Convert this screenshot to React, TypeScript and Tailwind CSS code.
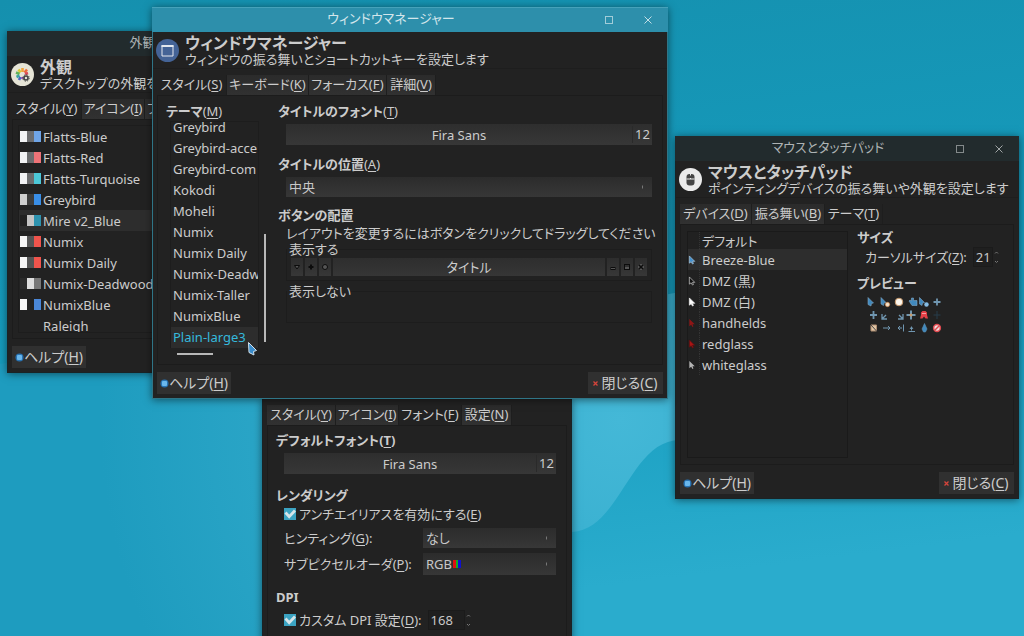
import { ReactNode } from "react";
import clsx from "clsx";

interface WindowProps {
    title?: string;
    active?: boolean;
    controls?: boolean;
    className: string;
    children: ReactNode;
}

function Window({ title, active, controls, className, children }: WindowProps) {
    return (
        <section
            className={clsx(
                "absolute bg-[#222222] shadow-[0_1px_8px_rgba(0,0,0,0.5)]",
                active ? "outline-1 -outline-offset-1 outline-[#2f7587]" : "outline-1 -outline-offset-1 outline-[#1a2325]",
                className
            )}
        >
            {title && (
                <div
                    className={clsx(
                        "relative flex h-[25px] items-center justify-center pb-1",
                        active ? "border-t border-[#46a2ba] bg-[#2d8fab] text-[#d3e6eb]" : "bg-[#222b2d] text-[#aeb3b4]"
                    )}
                >
                    <span className={clsx("leading-4", controls ? "pr-[38px]" : "pr-[2px]")}>{title}</span>
                    {controls && (
                        <div className="absolute right-0 top-0 flex h-full items-center gap-[23px] pr-4">
                            <button aria-label="最大化">
                                <svg width="16" height="16" viewBox="0 0 16 16" fill="none" stroke="currentColor" strokeOpacity="0.7">
                                    <rect x="4.5" y="4.5" width="7" height="7" />
                                </svg>
                            </button>
                            <button aria-label="閉じる" className="-mr-1">
                                <svg width="16" height="16" viewBox="0 0 16 16" fill="none" stroke="currentColor" strokeOpacity="0.9">
                                    <path d="M4.5 4.5l7 7M11.5 4.5l-7 7" />
                                </svg>
                            </button>
                        </div>
                    )}
                </div>
            )}
            {children}
        </section>
    );
}

function Header({ icon, title, text }: { icon: ReactNode; title: string; text: string }) {
    return (
        <header className="flex h-[37px] items-center gap-[6px] border-b border-[#1e1e1e] pl-[4px] pt-px">
            {icon}
            <div className="whitespace-nowrap">
                <h1 className="text-[16px] font-bold leading-4">{title}</h1>
                <p className="leading-4">{text}</p>
            </div>
        </header>
    );
}

// Label with its access key underlined, e.g. ヘルプ(H)
function Mnemonic({ text, hotkey, tail, bold }: { text: string; hotkey: string; tail?: string; bold?: boolean }) {
    return (
        <>
            {text}
            <span className={bold ? "font-bold" : "font-normal"}>
                (<u className="underline-offset-2">{hotkey}</u>){tail}
            </span>
        </>
    );
}

interface Tab {
    text: string;
    hotkey: string;
    width: string;
}

function Tabs({ tabs, active }: { tabs: Tab[]; active: number }) {
    return (
        <div role="tablist" className="mx-[5px] mt-[6px] flex h-5 overflow-hidden">
            {tabs.map((t, i) => (
                <button
                    key={t.text}
                    role="tab"
                    aria-selected={i === active}
                    className={clsx(
                        "flex shrink-0 justify-center whitespace-nowrap border-r border-[#1e1e1e] leading-[19px]",
                        t.width,
                        i === active ? "bg-[#222222]" : "bg-linear-to-b from-[#2b2b2b] to-[#313131]"
                    )}
                >
                    <Mnemonic text={t.text} hotkey={t.hotkey} />
                </button>
            ))}
        </div>
    );
}

function Footer({ closable }: { closable?: boolean }) {
    return (
        <footer className="flex justify-between px-[5px] pb-[5px] pt-[7px]">
            <button className="flex h-[22px] w-[74px] items-center justify-center bg-[#303030] text-[14px]">
                <svg width="9" height="9" viewBox="0 0 9 9">
                    <circle cx="4.5" cy="4.5" r="4" fill="#2873b3" />
                    <rect x="2" y="2" width="5" height="5" rx="1" fill="#6ab7ec" />
                </svg>
                <span>
                    <Mnemonic text="ヘルプ" hotkey="H" />
                </span>
            </button>
            {closable && (
                <button className="flex h-[22px] w-[75px] items-center justify-center gap-[3px] bg-[#303030] text-[14px]">
                    <svg width="5" height="5" viewBox="0 0 5 5" stroke="#d5443b" strokeWidth="1.3">
                        <path d="M.5 .5l4 4M4.5 .5l-4 4" />
                    </svg>
                    <span>
                        <Mnemonic text="閉じる" hotkey="C" />
                    </span>
                </button>
            )}
        </footer>
    );
}

function FontButton() {
    return (
        <button className="ml-2 flex h-[21px] items-center self-stretch bg-linear-to-b from-[#2e2e2e] to-[#373737] py-[2px]">
            <span className="flex-1">Fira Sans</span>
            <span className="w-5 border-l border-[#2a2a2a] leading-[17px]">12</span>
        </button>
    );
}

function Select({ id, value, className, children }: { id: string; value: string; className?: string; children?: ReactNode }) {
    return (
        <div className={clsx("relative flex bg-linear-to-b from-[#2c2c2c] to-[#373737]", className)}>
            <select id={id} className="w-full appearance-none bg-transparent pl-[3px] text-[#c8c8c8]">
                <option>{value}</option>
            </select>
            {children}
            <i className="pointer-events-none absolute right-[9px] top-1/2 h-[3px] w-px -translate-y-1/2 bg-[#777777]" />
        </div>
    );
}

function Spinner({ id, value, className }: { id: string; value: string; className: string }) {
    return (
        <div className="flex h-5 items-center">
            <input
                id={id}
                type="text"
                defaultValue={value}
                className={clsx("h-5 border border-[#1b1b1b] bg-[#1f1f1f] pl-[2px] text-[#c8c8c8]", className)}
            />
            <svg width="7" height="16" viewBox="0 0 7 16" fill="none" stroke="#777777">
                <path d="M2 4.5l1.5-1.5 1.5 1.5M2 12l1.5 1.5L5 12" />
            </svg>
        </div>
    );
}

function Check({ id, children }: { id: string; children: ReactNode }) {
    return (
        <div className="flex items-center gap-[3px]">
            <span className="relative flex">
                <input id={id} type="checkbox" defaultChecked className="h-3 w-3 appearance-none bg-[#3ba3c2]" />
                <svg className="pointer-events-none absolute inset-0" width="12" height="12" viewBox="0 0 12 12" fill="none" stroke="#d5e4e9" strokeWidth="2.8">
                    <path d="M1.5 4.500l3.700 4.200L11 2.500" />
                </svg>
            </span>
            <label htmlFor={id}>{children}</label>
        </div>
    );
}

const appearanceThemes = [
    { name: "Flatts-Blue", colors: ["#f2f3f5", "#6c6d6f", "#6fa5e8"] },
    { name: "Flatts-Red", colors: ["#f2f3f5", "#6c6d6f", "#ee7377"] },
    { name: "Flatts-Turquoise", colors: ["#f2f3f5", "#6c6d6f", "#4cc8d8"] },
    { name: "Greybird", colors: ["#cecece", "#3c3c3c", "#398ee7"] },
    { name: "Mire v2_Blue", colors: ["#222222", "#c4c4c4", "#2e93af"] },
    { name: "Numix", colors: ["#f5f5f5", "#555555", "#f0544c"] },
    { name: "Numix Daily", colors: ["#f5f5f5", "#555555", "#f0544c"] },
    { name: "Numix-Deadwood", colors: ["#2b2b2b", "#dddddd", "#777777"] },
    { name: "NumixBlue", colors: ["#f5f5f5", "#222222", "#4a87d8"] },
    { name: "Raleigh", colors: [] },
];

function AppearanceWindow() {
    return (
        <Window title="外観" className="left-[7px] top-[31px] w-[273px]">
            <Header
                title="外観"
                text="デスクトップの外観を設定します"
                icon={
                    <svg className="shrink-0" width="23" height="23" viewBox="0 0 23 23" fill="none" strokeWidth="2.6">
                        <circle cx="11.500" cy="11.500" r="11.500" fill="#e6e4d6" />
                        <path d="M11.500 9V5" stroke="#f2a23a" />
                        <path d="M13.500 9.500l2.500-3" stroke="#ec6a3c" />
                        <path d="M9.500 9.500L7.500 6.500" stroke="#d9c936" />
                        <path d="M8.500 11L5 9.500" stroke="#62b257" />
                        <path d="M8.500 12.500L5.500 14" stroke="#3aa6a0" />
                        <path d="M9.500 14l-1.500 3" stroke="#4a67c4" />
                        <path d="M14 11l3-1" stroke="#dc4a58" />
                        <path d="M11.500 14v2" stroke="#9653b5" />
                        <circle cx="15" cy="15" r="2" fill="#e6e4d6" stroke="#444444" strokeWidth="1.600" />
                        <circle cx="15" cy="15" r="3.200" stroke="#444444" strokeWidth="1" strokeDasharray="1.300 1.200" />
                    </svg>
                }
            />
            <Tabs
                active={0}
                tabs={[
                    { text: "スタイル", hotkey: "Y", width: "w-[70px]" },
                    { text: "アイコン", hotkey: "I", width: "w-[63px]" },
                    { text: "フォント", hotkey: "F", width: "w-[63px]" },
                ]}
            />
            <div className="mx-[5px] h-[220px] border border-[#1c1c1c] p-[5px]">
                <ul className="h-[208px] overflow-hidden border border-[#1d1d1d]">
                    {appearanceThemes.map(t => (
                        <li key={t.name} className={t.name === "Mire v2_Blue" ? "bg-[#2d2d2d]" : ""}>
                            <button className="flex h-[21px] w-full items-center gap-[2px] whitespace-nowrap">
                                <span className="ml-px flex h-[11px] w-[21px] shrink-0">
                                    {t.colors.map((c, i) => (
                                        <span key={i} className="flex-1" style={{ backgroundColor: c }} />
                                    ))}
                                </span>
                                {t.name}
                            </button>
                        </li>
                    ))}
                </ul>
            </div>
            <Footer />
        </Window>
    );
}

const wmThemes = [
    "Greybird",
    "Greybird-acce",
    "Greybird-com",
    "Kokodi",
    "Moheli",
    "Numix",
    "Numix Daily",
    "Numix-Deadw",
    "Numix-Taller",
    "NumixBlue",
    "Plain-large3",
];

function LayoutButton({ label, children }: { label: string; children: ReactNode }) {
    return (
        <button aria-label={label} className="flex w-3 shrink-0 items-center justify-center bg-linear-to-b from-[#2d2d2d] to-[#373737]">
            <svg width="8" height="8" viewBox="0 0 8 8" fill="#555555" stroke="#0c0c0c">
                {children}
            </svg>
        </button>
    );
}

function WindowManagerWindow() {
    return (
        <Window title="ウィンドウマネージャー" active controls className="left-[152px] top-[7px] w-[516px]">
            <Header
                title="ウィンドウマネージャー"
                text="ウィンドウの振る舞いとショートカットキーを設定します"
                icon={
                    <svg className="shrink-0" width="23" height="23" viewBox="0 0 23 23" fill="none">
                        <circle cx="11.500" cy="11.500" r="11.500" fill="#446396" />
                        <path d="M6 6.500h11v10.500H6z" stroke="#e4e8ee" />
                        <path d="M5.500 7h12" stroke="#e4e8ee" strokeWidth="2" />
                    </svg>
                }
            />
            <Tabs
                active={0}
                tabs={[
                    { text: "スタイル", hotkey: "S", width: "w-[70px]" },
                    { text: "キーボード", hotkey: "K", width: "w-[82px]" },
                    { text: "フォーカス", hotkey: "F", width: "w-[78px]" },
                    { text: "詳細", hotkey: "V", width: "w-[49px]" },
                ]}
            />
            <div className="mx-[5px] flex h-[270px] gap-3 border border-[#1c1c1c] pl-2 pr-[10px] pt-[5px]">
                <div className="w-[100px] shrink-0">
                    <h2 className="font-bold leading-5">
                        <Mnemonic text="テーマ" hotkey="M" />
                    </h2>
                    <div className="ml-1 flex h-[227px] justify-between">
                        <ul className="flex w-[89px] flex-col justify-end overflow-hidden border-x border-t border-[#1d1d1d]">
                            {wmThemes.map(name => (
                                <li key={name} className={name === "Plain-large3" ? "bg-[#2d2d2d] text-[#35b9dc]" : ""}>
                                    <button className="block h-[21px] w-full whitespace-nowrap pl-[2px] text-left leading-[21px]">{name}</button>
                                </li>
                            ))}
                        </ul>
                        <i className="mb-[6px] h-[108px] w-[2px] self-end bg-[#b8b8b8]" />
                    </div>
                    <i className="ml-[11px] mt-[5px] block h-[2px] w-9 bg-[#b8b8b8]" />
                </div>
                <div className="flex min-w-0 flex-1 flex-col">
                    <h2 className="mb-[3px] font-bold leading-5">
                        <Mnemonic text="タイトルのフォント" hotkey="T" />
                    </h2>
                    <FontButton />
                    <h2 className="mb-[3px] mt-[9px] font-bold leading-5">
                        <label htmlFor="align">
                            <Mnemonic text="タイトルの位置" hotkey="A" />
                        </label>
                    </h2>
                    <Select id="align" value="中央" className="ml-2 h-5" />
                    <h2 className="mt-2 font-bold leading-5">ボタンの配置</h2>
                    <p className="ml-2 whitespace-nowrap leading-4">レイアウトを変更するにはボタンをクリックしてドラッグしてください</p>
                    <fieldset className="ml-2 border border-[#1d1d1d] px-1 pb-1">
                        <legend className="-ml-1 pl-[2px] leading-[17px]">表示する</legend>
                        <div className="flex h-[18px] gap-[2px]">
                            <LayoutButton label="メニュー">
                                <path d="M1.500 2.500h5L4 6z" />
                            </LayoutButton>
                            <LayoutButton label="固定">
                                <path d="M4 1.500v5M1.500 4h5" strokeWidth="2" />
                            </LayoutButton>
                            <LayoutButton label="シェード">
                                <circle cx="4" cy="4" r="2.500" />
                            </LayoutButton>
                            <button className="flex-1 bg-linear-to-b from-[#2e2e2e] to-[#363636] leading-[18px]">タイトル</button>
                            <LayoutButton label="最小化">
                                <rect x="2" y="4.500" width="4" height="2" />
                            </LayoutButton>
                            <LayoutButton label="最大化">
                                <rect x="1.500" y="1.500" width="5" height="5" />
                                <path d="M2 3h4" />
                            </LayoutButton>
                            <LayoutButton label="閉じる">
                                <rect x="1" y="1" width="6" height="6" stroke="none" />
                                <path d="M1.500 1.500l5 5M6.500 1.500l-5 5" strokeWidth="1.500" />
                            </LayoutButton>
                        </div>
                    </fieldset>
                    <fieldset className="ml-2 mt-[2px] h-10 border border-[#1d1d1d]">
                        <legend className="pl-[2px] leading-4">表示しない</legend>
                    </fieldset>
                </div>
            </div>
            <Footer closable />
        </Window>
    );
}

function FontWindow() {
    return (
        <Window className="left-[262px] top-[398px] h-[260px] w-[310px] pt-px">
            <Tabs
                active={2}
                tabs={[
                    { text: "スタイル", hotkey: "Y", width: "w-[69px]" },
                    { text: "アイコン", hotkey: "I", width: "w-[63px]" },
                    { text: "フォント", hotkey: "F", width: "w-[63px]" },
                    { text: "設定", hotkey: "N", width: "w-[50px]" },
                ]}
            />
            <div className="mx-[5px] flex h-[240px] flex-col border border-[#1c1c1c] pl-2 pr-[10px] pt-[4px]">
                <h2 className="mb-[3px] font-bold leading-5">
                    <Mnemonic text="デフォルトフォント" hotkey="T" bold />
                </h2>
                <FontButton />
                <h2 className="mt-[11px] font-bold leading-5">レンダリング</h2>
                <div className="ml-2 flex flex-col">
                    <Check id="antialias">
                        <Mnemonic text="アンチエイリアスを有効にする" hotkey="E" />
                    </Check>
                    <div className="mt-[5px] flex items-center justify-between">
                        <label htmlFor="hinting">
                            <Mnemonic text="ヒンティング" hotkey="G" tail=":" />
                        </label>
                        <Select id="hinting" value="なし" className="h-5 w-[133px]" />
                    </div>
                    <div className="mt-[5px] flex items-center justify-between">
                        <label htmlFor="subpixel">
                            <Mnemonic text="サブピクセルオーダ" hotkey="P" tail=":" />
                        </label>
                        <Select id="subpixel" value="RGB" className="h-[22px] w-[133px]">
                            <span className="pointer-events-none absolute left-[30px] top-[7px] flex h-2 w-2">
                                <i className="flex-1 bg-[#e01010]" />
                                <i className="flex-1 bg-[#10b020]" />
                                <i className="flex-1 bg-[#1010d0]" />
                            </span>
                        </Select>
                    </div>
                </div>
                <h2 className="mb-[3px] mt-3 font-bold leading-5">DPI</h2>
                <div className="ml-2 flex items-center gap-[6px]">
                    <Check id="custom-dpi">
                        <Mnemonic text="カスタム DPI 設定" hotkey="D" tail=":" />
                    </Check>
                    <Spinner id="dpi" value="168" className="w-[37px]" />
                </div>
            </div>
        </Window>
    );
}

const cursorThemes = [
    { name: "デフォルト", fill: "none", stroke: "none" },
    { name: "Breeze-Blue", fill: "#4591cd", stroke: "#a7c3d8" },
    { name: "DMZ (黒)", fill: "#111111", stroke: "#c8c8c8" },
    { name: "DMZ (白)", fill: "#ffffff", stroke: "#eeeeee" },
    { name: "handhelds", fill: "#8e1616", stroke: "none" },
    { name: "redglass", fill: "#a81515", stroke: "#5b1010" },
    { name: "whiteglass", fill: "#b5b5b5", stroke: "none" },
];

function CursorPreview() {
    return (
        <svg className="ml-2 mt-[2px]" width="80" height="40" viewBox="0 0 80 40" fill="none" stroke="#7096b0">
            {/* pointers */}
            <g fill="#4189bd" stroke="#7fa6c2" strokeWidth="0.600">
                <path d="M3 2.500l5.500 5.500-2 .5-.5 2.500L3 9.500z" />
                <path d="M16 2.500l5 5-2 .5-.5 2.500L16 9z" />
                <path d="M46.500 3v3l-1.500-1-1 1 3 4.500h5V5.500h-3.500V3z" />
                <path d="M54.500 2.500l5 5-2 .5-.5 2.500L54.500 9z" />
            </g>
            <circle cx="22.500" cy="9.500" r="2.200" fill="#f2e1cb" stroke="#ce7d3f" strokeWidth="0.600" />
            <circle cx="34" cy="7" r="3.800" fill="#fbf6ed" stroke="#c59668" />
            <circle cx="61.500" cy="9.500" r="2.200" fill="#85bce3" stroke="none" />
            <path d="M72 3.500v7M68.500 7h7" strokeWidth="1.800" />
            {/* resize and move */}
            <path d="M8.500 16v8M5 20h7" strokeWidth="1.800" />
            <path d="M17 19v5h5M17 24l4-4M38 19v5h-5M38 24l-4-4" strokeWidth="1.300" />
            <path d="M46 15.500v9M41.500 20h9" strokeWidth="2" />
            <circle cx="46" cy="20" r="1.500" fill="#c69c70" stroke="none" />
            <path d="M56 17.500l1.500-1.500h3l1.500 1.500V20l1 3.500h-2.500L59 21.500l-1.500 2H55l1-3.500z" fill="#e43f47" stroke="none" />
            <path d="M57.500 18.500h1M59.500 18.500h1" stroke="#ffffff" />
            <path d="M72 16v8M68.500 20h7" stroke="#263d4b" />
            {/* edges, pencil, not allowed */}
            <path d="M6 30h5.500v6H6z" fill="#e0c5a5" stroke="#ae8d70" />
            <path d="M6 30l5.500 6" stroke="#444444" />
            <path d="M18 33h7M23 31l2 2-2 2" />
            <path d="M33 33h4M38.500 29.500v7M35 31l-2 2 2 2" />
            <path d="M43.500 36.500h6.500M46.500 31.500v4M45 34l1.500-2 1.500 2" />
            <path d="M59.500 28.500l2.500 5.500-1.500 3h-2L57 34z" fill="#4189bd" stroke="#5c91b6" strokeWidth="0.600" />
            <circle cx="72" cy="33" r="3.400" fill="#f0dede" stroke="#df4a50" strokeWidth="1.500" />
            <path d="M70 35l4-4" stroke="#df4a50" strokeWidth="1.400" />
        </svg>
    );
}

function MouseWindow() {
    return (
        <Window title="マウスとタッチパッド" controls className="left-[675px] top-[136px] w-[344px]">
            <Header
                title="マウスとタッチパッド"
                text="ポインティングデバイスの振る舞いや外観を設定します"
                icon={
                    <svg className="shrink-0" width="23" height="23" viewBox="0 0 23 23">
                        <circle cx="11.500" cy="11.500" r="11.500" fill="#ebebeb" />
                        <rect x="7.500" y="6" width="8" height="11.500" rx="3" fill="#454545" />
                        <path d="M7.500 11h8M11.500 6v5" stroke="#ebebeb" />
                        <path d="M11.500 7.500v2.500" stroke="#454545" strokeWidth="1.500" />
                    </svg>
                }
            />
            <Tabs
                active={2}
                tabs={[
                    { text: "デバイス", hotkey: "D", width: "w-[72px]" },
                    { text: "振る舞い", hotkey: "B", width: "w-[73px]" },
                    { text: "テーマ", hotkey: "T", width: "w-[58px]" },
                ]}
            />
            <div className="mx-[5px] flex h-[241px] gap-[9px] border border-[#1c1c1c] p-[6px]">
                <ul className="w-[161px] shrink-0 border border-[#1a1a1a] bg-[#212121]">
                    {cursorThemes.map(t => (
                        <li key={t.name} className={t.name === "Breeze-Blue" ? "bg-[#2d2d2d]" : ""}>
                            <button
                                className={clsx("flex w-full items-center text-left", t.stroke === "none" && t.fill === "none" ? "h-[17px]" : "h-[21px]")}
                            >
                                <span className="flex h-full w-3 items-center border-r border-dotted border-[#343434]">
                                    <svg width="9" height="12" viewBox="0 0 10 12">
                                        <path d="M1.500 1.500v8l2-1.500L5 10.500l1-.5-1-2.500h2.500z" fill={t.fill} stroke={t.stroke} strokeWidth="0.800" />
                                    </svg>
                                </span>
                                <span className="pl-[2px]">{t.name}</span>
                            </button>
                        </li>
                    ))}
                </ul>
                <div className="-mt-1 flex-1">
                    <h2 className="font-bold leading-5">サイズ</h2>
                    <div className="ml-2 flex items-center gap-[6px] whitespace-nowrap">
                        <label htmlFor="cursor-size">
                            <Mnemonic text="カーソルサイズ" hotkey="Z" tail=":" />
                        </label>
                        <Spinner id="cursor-size" value="21" className="w-5" />
                    </div>
                    <h2 className="mt-[6px] font-bold leading-5">プレビュー</h2>
                    <CursorPreview />
                </div>
            </div>
            <Footer closable />
        </Window>
    );
}

export default function App() {
    return (
        <main className="relative min-h-screen overflow-hidden bg-[#159ab9] font-['Noto_Sans','Noto_Sans_CJK_JP',sans-serif] text-[13px] leading-[18px] text-[#cccccc] [font-feature-settings:'palt']">
            <svg className="absolute inset-0 h-full w-full" viewBox="0 0 1024 636" preserveAspectRatio="none">
                <defs>
                    <linearGradient id="sky" x1="0" y1="0" x2="0.2" y2="1">
                        <stop offset="0" stopColor="#1590ae" />
                        <stop offset="0.600" stopColor="#169cbe" />
                        <stop offset="1" stopColor="#2aaccd" />
                    </linearGradient>
                    <radialGradient id="glow" gradientUnits="userSpaceOnUse" cx="620" cy="420" r="520">
                        <stop offset="0" stopColor="#44b8d7" />
                        <stop offset="1" stopColor="#1e9cbf" />
                    </radialGradient>
                </defs>
                <rect width="1024" height="636" fill="url(#sky)" />
                <path d="M0 364C230 330 480 330 680 292V440C630 440 620 530 572 532V636H0z" fill="url(#glow)" />
            </svg>
            <AppearanceWindow />
            <FontWindow />
            <MouseWindow />
            <WindowManagerWindow />
            <svg className="absolute left-[247px] top-[341px]" width="11" height="16" viewBox="0 0 11 16">
                <path d="M1.500 1.500l8 8-3 1 .5 3.500-5-2.500z" fill="#3a8ccb" stroke="#d3e2ec" />
            </svg>
        </main>
    );
}
